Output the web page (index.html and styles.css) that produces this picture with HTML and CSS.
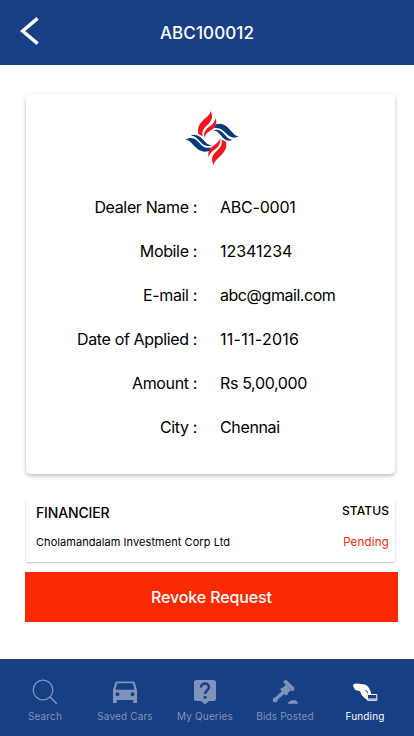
FILE: index.html
```
<!DOCTYPE html>
<html lang="en">
<head>
<meta charset="utf-8">
<meta name="viewport" content="width=device-width, initial-scale=1">
<title>ABC100012</title>
<link rel="stylesheet" href="styles.css">
</head>
<body>
<div class="app">
  <header class="header">
    <svg class="back" viewBox="0 0 20 30"><path d="M17.6 2.3 2.6 15 17.6 27.6"/></svg>
    <h1 class="title">ABC100012</h1>
  </header>
  <main class="content">
    <section class="card">
      <svg class="logo" viewBox="42 30 168 168">
        <g fill="#f5141c">
          <path d="M122 33C120 45 109 51 98 62C87 73 82 84 85 102L98 109C94 94 102 83 115 72C127 61 129 48 122 33Z"/>
          <path d="M136 54C135 66 127 73 118 80C106 88 101 96 102 113C106 102 113 97 123 91C137 82 143 71 136 54Z"/>
          <path d="M131 195C133 182 143 176 154 165C166 153 171 143 168 126L155 118C158 134 151 144 138 155C125 167 123 179 131 195Z"/>
          <path d="M117 173C117 162 126 154 136 147C147 139 152 130 151 114C147 126 139 131 130 137C117 146 112 156 117 173Z"/>
        </g>
        <g fill="#083b7c">
          <path d="M207 109C195 109 188 97 177 86C165 73 151 69 138 73L132 85C147 81 157 88 168 100C181 114 192 116 207 109Z"/>
          <path d="M188 119C178 120 171 112 163 103C153 91 144 87 128 91C140 92 146 98 152 106C162 120 174 126 188 119Z"/>
          <path d="M46 119C59 119 66 131 77 142C90 156 103 157 117 153L122 142C107 147 97 140 86 127C73 113 61 111 46 119Z"/>
          <path d="M62 107C74 106 81 115 91 125C101 137 111 141 128 136C115 136 108 130 101 121C89 106 75 100 62 107Z"/>
        </g>
      </svg>
      <dl class="details">
        <dt>Dealer Name :</dt><dd class="code">ABC-0001</dd>
        <dt>Mobile :</dt><dd class="phone">12341234</dd>
        <dt>E-mail :</dt><dd class="email">abc@gmail.com</dd>
        <dt>Date of Applied :</dt><dd class="date">11-11-2016</dd>
        <dt>Amount :</dt><dd>Rs 5,00,000</dd>
        <dt>City :</dt><dd>Chennai</dd>
      </dl>
    </section>
    <section class="financier">
      <div class="col">
        <h2 class="heading">FINANCIER</h2>
        <p class="name">Cholamandalam Investment Corp Ltd</p>
      </div>
      <div class="col col-status">
        <h2 class="heading status-heading">STATUS</h2>
        <p class="status">Pending</p>
      </div>
    </section>
    <button class="revoke">Revoke Request</button>
  </main>
  <nav class="tabs">
    <a class="tab">
      <svg class="icon" viewBox="0 0 26 26"><circle cx="11" cy="11" r="9.8" fill="none" stroke="currentColor" stroke-width="1.3"/><path d="m18 18 6.8 6.8" stroke="currentColor" stroke-width="1.6"/></svg>
      <span>Search</span>
    </a>
    <a class="tab">
      <svg class="icon" viewBox="0 0 26 26"><path fill="currentColor" fill-rule="evenodd" d="M4.8 2.5h16.400q1.200 0 1.600 1.200L25 11v13h-3.800v-3H4.800v3H1V11l2.200-7.300q.4-1.200 1.600-1.200ZM5.200 4.300 3.500 10.700h19L20.800 4.300ZM5.500 13.300a2 2 0 1 0 0 4 2 2 0 0 0 0-4Zm15 0a2 2 0 1 0 0 4 2 2 0 0 0 0-4Z"/></svg>
      <span>Saved Cars</span>
    </a>
    <a class="tab">
      <svg class="icon" viewBox="0 0 26 26"><path fill="currentColor" d="M4.500 1h17Q24 1 24 3.500v16q0 2.500-2.500 2.500H17l-4 3.600L9 22H4.500Q2 22 2 19.500v-16Q2 1 4.500 1Z"/><path fill="none" stroke="#183e83" stroke-width="2.500" d="M9 8.500C9 3.300 17 3.300 17 8.300c0 3-4 3.200-4 6.700"/><path fill="#183e83" d="M11.700 17h2.700v2.700h-2.700z"/></svg>
      <span>My Queries</span>
    </a>
    <a class="tab">
      <svg class="icon" viewBox="0 0 26 26"><g fill="currentColor"><path d="m11.500 2.200 1.800-1.200 1.400.3 7.600 7.500.1 1.700-1.500 1.700-1.500-.2-.8-.8-3 3 .5.9-1.300 1.200-1.300-.1L8.600 11l-.1-1.500 1.300-1 1 .6 2.800-3.300-2-2z"/><path d="m11.500 10.500 2.900 2.800-8.700 7.200q.2 2.800-2.400 2.800Q.6 23.200.8 20.400q.4-2.100 2.700-2.200zM15.600 24.700q.2-1.300 2-2.300 1-1.200 2.400-1.200h2.300q1.500 0 2.500 1.300 1.200.9 1.200 2.200z"/></g><path d="m12.300 4.200 7.500 7.300" stroke="#183e83" stroke-width=".4"/></svg>
      <span>Bids Posted</span>
    </a>
    <a class="tab tab-active">
      <svg class="icon" viewBox="0 0 26 26"><path fill="currentColor" d="M1.500 5 5.500 4.500 13 5.600q3 1.100 4 3.300 1.800 2.600 2 5.600v2h-3v5q-3.600-1.600-6.500-5.700L8 12.300 3.200 10.900 1 7z"/><path d="M13.200 11.300q2.300.3 2.600 3" fill="none" stroke="#183e83" stroke-width="1"/><path d="M15.500 15.500h9.300v5.800h-9.300z" fill="#183e83" stroke="currentColor"/><path fill="#aab8d2" d="M16 19.200h8.300V21H16z"/></svg>
      <span>Funding</span>
    </a>
  </nav>
</div>
</body>
</html>
```
FILE: styles.css
```
* { box-sizing: border-box; }

body, h1, h2, p, dl, dd { margin: 0; }

body {
  font-family: Inter, "Liberation Sans", sans-serif;
  color: #000;
  background: #fff;
}

.app {
  display: flex;
  flex-direction: column;
  height: 736px;
}

.header {
  display: grid;
  grid-template-columns: 60px 1fr 60px;
  align-items: center;
  height: 65px;
  background: #183e83;
  color: #fff;
}

.back {
  width: 20px;
  height: 30px;
  margin: 0 0 3px 20px;
  fill: none;
  stroke: #fff;
  stroke-width: 3.5;
}

.title {
  font-size: 17px;
  font-weight: 500;
  letter-spacing: 0.1px;
  text-align: center;
}

.content {
  flex: 1;
  padding: 29px 16px 0 25px;
}

.card {
  width: 369px;
  height: 380px;
  margin-left: 1px;
  padding-top: 16px;
  border-radius: 5px;
  box-shadow: 0 2px 4px rgba(0, 0, 0, 0.26);
}

.logo {
  display: block;
  width: 56px;
  height: 56px;
  margin-left: 158px;
}

.details {
  display: grid;
  grid-template-columns: 171px 1fr;
  grid-auto-rows: 44px;
  column-gap: 23px;
  align-items: center;
  margin-top: 19px;
  font-size: 16px;
  letter-spacing: -0.36px;
}

.details dt { text-align: right; }

.details .code { letter-spacing: -0.22px; }
.details .phone { letter-spacing: -0.05px; }
.details .email { letter-spacing: -0.46px; }
.details .date { letter-spacing: 0.28px; }

.financier {
  display: flex;
  justify-content: space-between;
  width: 369px;
  height: 63px;
  margin: 25px 0 0 1px;
  padding: 4px 6px 0 10px;
  border-radius: 2px;
  box-shadow: 0 1px 2px rgba(0, 0, 0, 0.26);
}

.heading {
  font-size: 14px;
  font-weight: 500;
  line-height: 20px;
  letter-spacing: -0.15px;
}

.col-status { text-align: right; }

.col .status-heading {
  margin: -2px 0 2px;
  font-size: 12px;
  letter-spacing: 0.1px;
}

.name, .status {
  margin-top: 10px;
  font-size: 11px;
  line-height: 18px;
  letter-spacing: 0.06px;
}

.status {
  margin-top: 12px;
  color: #fb2801;
  font-size: 11.5px;
  letter-spacing: 0.2px;
}

.revoke {
  display: block;
  width: 373px;
  height: 50px;
  margin-top: 10px;
  padding: 0;
  border: 0;
  background: #fc2a02;
  color: #fff;
  font: 500 16px Inter, "Liberation Sans", sans-serif;
  letter-spacing: -0.12px;
}

.tabs {
  display: flex;
  height: 77px;
  padding: 20px 9px 0 5px;
  background: #183e83;
}

.tab {
  display: flex;
  flex: 1;
  flex-direction: column;
  align-items: center;
  gap: 4px;
  color: #8094bb;
  font-size: 10px;
  line-height: 14px;
  letter-spacing: 0.15px;
  white-space: nowrap;
}

.tab-active { color: #fff; }

.icon {
  width: 26px;
  height: 26px;
}
```
